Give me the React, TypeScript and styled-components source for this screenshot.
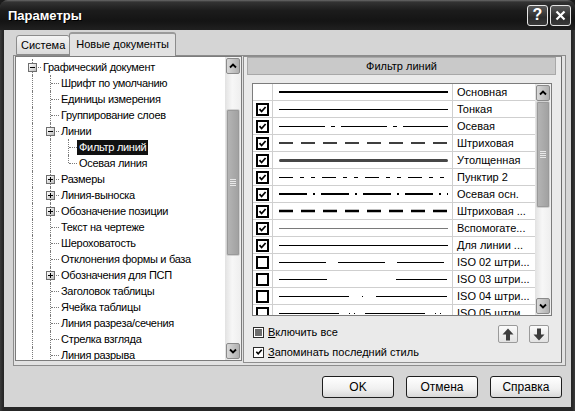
import React from "react";
import styled, { createGlobalStyle } from "styled-components";

const GlobalStyle = createGlobalStyle`
  html, body { margin: 0; padding: 0; background: #1b1b1b; }
  body { width: 575px; height: 411px; overflow: hidden; font-family: "Liberation Sans", Arial, sans-serif; }
  * { box-sizing: border-box; }
`;

const Window = styled.div`
  width: 575px;
  height: 411px;
  display: flex;
  flex-direction: column;
  background: linear-gradient(to right, #3a3a3a, #262626 3px, #262626 calc(100% - 3px), #3a3a3a);
  border-radius: 8px 8px 0 0;
  overflow: hidden;
`;

const TitleBar = styled.div`
  height: 30px;
  flex: none;
  display: flex;
  align-items: center;
  padding: 0 4px 0 8px;
  background: linear-gradient(#6a6a6a 0, #333 2px, #1c1c1c 35%, #141414 70%, #202020 100%);
`;

const Title = styled.div`
  flex: 1;
  color: #fff;
  font: bold 13px "Liberation Sans", Arial, sans-serif;
  text-shadow: 1px 1px 0 #000;
`;

const CaptionButton = styled.div`
  width: 21px;
  height: 21px;
  margin-left: 2px;
  border: 1px solid #e6e6e6;
  border-radius: 3px;
  background: linear-gradient(#5a5a5a, #2c2c2c 60%, #3a3a3a);
  display: flex;
  align-items: center;
  justify-content: center;
  color: #fff;
  font: bold 16px "Liberation Sans", Arial, sans-serif;
`;

const Body = styled.div`
  flex: 1;
  margin: 0 4px 4px;
  background: #d5d5d5;
  display: flex;
  flex-direction: column;
  padding: 3px 5px 0 9px;
`;

const TabStrip = styled.div`
  display: flex;
  align-items: flex-end;
  height: 23px;
  padding-left: 3px;
  margin-bottom: -1px;
  position: relative;
  z-index: 1;
`;

const Tab = styled.div<{ $active?: boolean }>`
  height: ${(p) => (p.$active ? 24 : 20)}px;
  padding: ${(p) => (p.$active ? "0 6px 2px 6px" : "0 4px 0 4px")};
  margin-bottom: ${(p) => (p.$active ? 0 : 1)}px;
  display: flex;
  align-items: center;
  font-size: 11px;
  color: #000;
  border: 1px solid #8c8c8c;
  border-bottom: ${(p) => (p.$active ? "none" : "1px solid #8c8c8c")};
  border-radius: 3px 3px 0 0;
  background: ${(p) =>
    p.$active ? "#e2e2e2" : "linear-gradient(#f4f4f4, #dadada)"};
  ${(p) => (p.$active ? "border-top: 2px solid #9a9a9a;" : "margin-right: -1px;")}
`;

const TabPage = styled.div`
  height: 311px;
  flex: none;
  border: 1px solid #8c8c8c;
  background: #e2e2e2;
  padding: 0 3px 0 1px;
  display: flex;
  align-items: flex-start;
  gap: 1px;
`;

/* ---------- tree ---------- */

const TreeBox = styled.div`
  width: 227px;
  height: 305px;
  border: 1px solid #7c7c7c;
  background: #fff;
  display: flex;
`;

const TreeList = styled.div`
  flex: 1;
  padding-top: 2px;
  overflow: hidden;
  font-size: 11px;
  letter-spacing: -0.3px;
`;

const TreeRow = styled.div`
  height: 16px;
  display: flex;
  align-items: center;
  padding-left: 7px;
  white-space: nowrap;
`;

const Guide = styled.div<{ $line?: "full" | "half" | "none"; $branch?: boolean }>`
  width: 18px;
  height: 16px;
  flex: none;
  position: relative;
  &::before {
    content: "";
    display: ${(p) => (p.$line === "none" ? "none" : "block")};
    position: absolute;
    left: 9px;
    top: 0;
    height: ${(p) => (p.$line === "half" ? 8 : 16)}px;
    border-left: 1px dotted #7a7a7a;
  }
  &::after {
    content: "";
    display: ${(p) => (p.$branch ? "block" : "none")};
    position: absolute;
    left: 10px;
    top: 8px;
    width: 8px;
    border-top: 1px dotted #7a7a7a;
  }
`;

const Expander = styled.div`
  position: absolute;
  left: 5px;
  top: 4px;
  width: 9px;
  height: 9px;
  border: 1px solid #6e6e6e;
  background: linear-gradient(135deg, #fff, #bdbdbd);
  z-index: 1;
  display: flex;
  align-items: center;
  justify-content: center;
`;

const TreeLabel = styled.span<{ $selected?: boolean }>`
  height: 15px;
  line-height: 15px;
  padding: 0 2px;
  color: ${(p) => (p.$selected ? "#fff" : "#000")};
  background: ${(p) => (p.$selected ? "#111" : "transparent")};
`;

/* ---------- scrollbar ---------- */

const ScrollBar = styled.div`
  width: 16px;
  flex: none;
  display: flex;
  flex-direction: column;
  background: linear-gradient(to right, #e2e2e2, #f7f7f7 45%, #eeeeee);
`;

const ScrollBtn = styled.div`
  height: 16px;
  margin: 1px 1px 0;
  flex: none;
  border: 1px solid #8a8a8a;
  border-radius: 2px;
  background: linear-gradient(to right, #d8d8d8, #b0b0b0);
  display: flex;
  align-items: center;
  justify-content: center;
  &:last-child {
    margin: 0 1px 1px;
  }
`;

const Track = styled.div`
  flex: 1;
  position: relative;
`;

const Thumb = styled.div<{ $top: number; $h: number }>`
  position: absolute;
  left: 1px;
  right: 1px;
  top: ${(p) => p.$top}px;
  height: ${(p) => p.$h}px;
  border: 1px solid #d2d2d2;
  outline: 1px solid #9a9a9a;
  outline-offset: -2px;
  border-radius: 2px;
  background: linear-gradient(to right, #b6b6b6, #a0a0a0);
  display: flex;
  align-items: center;
  justify-content: center;
`;

const Grip = styled.div`
  width: 6px;
  height: 7px;
  background: repeating-linear-gradient(#e8e8e8 0 1px, transparent 1px 2px);
`;

const Chevron = ({ down }: { down?: boolean }) => (
  <svg width="8" height="6" viewBox="0 0 8 6">
    <path
      d={down ? "M1 1.5 L4 4.5 L7 1.5" : "M1 4.5 L4 1.5 L7 4.5"}
      fill="none"
      stroke="#000"
      strokeWidth="1.8"
    />
  </svg>
);

const VScroll = ({ top, h }: { top: number; h: number }) => (
  <ScrollBar>
    <ScrollBtn>
      <Chevron />
    </ScrollBtn>
    <Track>
      <Thumb $top={top} $h={h}>
        <Grip />
      </Thumb>
    </Track>
    <ScrollBtn>
      <Chevron down />
    </ScrollBtn>
  </ScrollBar>
);

/* ---------- right panel ---------- */

const Panel = styled.div`
  width: 319px;
  height: 307px;
  border: 1px solid #8e8e8e;
  border-right-color: #6a6a6a;
  background: #eaeaea;
  display: flex;
  flex-direction: column;
`;

const PanelHeader = styled.div`
  height: 18px;
  margin: 0 5px 0 3px;
  border: 1px solid #a8a8a8;
  background: #c9c9c9;
  display: flex;
  align-items: center;
  justify-content: center;
  font-size: 11px;
`;

const ListBox = styled.div`
  height: 233px;
  margin: 8px 9px 0 8px;
  border: 1px solid #7c7c7c;
  background: #fff;
  display: flex;
`;

const Rows = styled.div`
  flex: 1;
  overflow: hidden;
`;

const LineRow = styled.div`
  height: 17px;
  display: grid;
  grid-template-columns: 20px 180px 1fr;
  border-bottom: 1px solid #cfcfcf;
`;

const Cell = styled.div`
  display: flex;
  align-items: center;
  border-right: 1px solid #cfcfcf;
  overflow: hidden;
`;

const CheckCell = styled(Cell)`
  justify-content: center;
`;

const SampleCell = styled(Cell)`
  padding-left: 6px;
`;

const LabelCell = styled(Cell)`
  border-right: none;
  padding-left: 4px;
  font-size: 11px;
  white-space: nowrap;
`;

const BigCheck = styled.div`
  width: 13px;
  height: 13px;
  border: 2px solid #000;
  background: #fff;
  display: flex;
  align-items: center;
  justify-content: center;
`;

const Tick = ({ size = 9 }: { size?: number }) => (
  <svg width={size} height={size} viewBox="0 0 9 9">
    <path d="M1.5 4.2 L3.6 6.5 L7.6 2" fill="none" stroke="#000" strokeWidth="1.8" />
  </svg>
);

const PanelFooter = styled.div`
  display: flex;
  justify-content: space-between;
  margin: 8px 12px 0 9px;
`;

const Options = styled.div`
  display: flex;
  flex-direction: column;
  gap: 4px;
`;

const Option = styled.div`
  height: 16px;
  display: flex;
  align-items: center;
  gap: 4px;
  font-size: 11px;
  u {
    text-decoration: underline;
  }
`;

const SmallCheck = styled.div<{ $mixed?: boolean }>`
  width: 11px;
  height: 11px;
  border: 1px solid #2a2a2a;
  background: #fff;
  display: flex;
  align-items: center;
  justify-content: center;
  &::before {
    content: "";
    display: ${(p) => (p.$mixed ? "block" : "none")};
    width: 7px;
    height: 7px;
    background: #6e6e6e;
  }
`;

const Arrows = styled.div`
  display: flex;
  gap: 11px;
  padding-top: 1px;
`;

const ArrowBtn = styled.div`
  width: 20px;
  height: 18px;
  border: 1px solid #9a9a9a;
  border-radius: 2px;
  background: linear-gradient(#fbfbfb, #e2e2e2);
  display: flex;
  align-items: center;
  justify-content: center;
`;

const BigArrow = ({ down }: { down?: boolean }) => (
  <svg width="12" height="13" viewBox="0 0 12 13">
    <path
      d="M6 0.5 L11.5 6.5 L8 6.5 L8 12.5 L4 12.5 L4 6.5 L0.5 6.5 Z"
      fill="#3c3c3c"
      transform={down ? "rotate(180 6 6.5)" : undefined}
    />
  </svg>
);

/* ---------- dialog buttons ---------- */

const ButtonRow = styled.div`
  display: flex;
  justify-content: flex-end;
  gap: 12px;
  margin-top: 10px;
  padding-right: 4px;
`;

const DialogButton = styled.div`
  width: 72px;
  height: 22px;
  border: 1px solid #1e1e1e;
  border-radius: 3px;
  background: linear-gradient(#ffffff, #f0f0f0 60%, #d8d8d8);
  display: flex;
  align-items: center;
  justify-content: center;
  font-size: 12px;
`;

/* ---------- data ---------- */

type TreeItem = {
  label: string;
  level: number;
  toggle?: "plus" | "minus";
  last?: boolean;
  selected?: boolean;
};

const tree: TreeItem[] = [
  { label: "Графический документ", level: 0, toggle: "minus" },
  { label: "Шрифт по умолчанию", level: 1 },
  { label: "Единицы измерения", level: 1 },
  { label: "Группирование слоев", level: 1 },
  { label: "Линии", level: 1, toggle: "minus" },
  { label: "Фильтр линий", level: 2, selected: true },
  { label: "Осевая линия", level: 2, last: true },
  { label: "Размеры", level: 1, toggle: "plus" },
  { label: "Линия-выноска", level: 1, toggle: "plus" },
  { label: "Обозначение позиции", level: 1, toggle: "plus" },
  { label: "Текст на чертеже", level: 1 },
  { label: "Шероховатость", level: 1 },
  { label: "Отклонения формы и база", level: 1 },
  { label: "Обозначения для ПСП", level: 1, toggle: "plus" },
  { label: "Заголовок таблицы", level: 1 },
  { label: "Ячейка таблицы", level: 1 },
  { label: "Линия разреза/сечения", level: 1 },
  { label: "Стрелка взгляда", level: 1 },
  { label: "Линия разрыва", level: 1 },
];

type Sample = { w: number; c?: string; dash?: string; round?: boolean };

const lineTypes: { label: string; checked: boolean | null; sample: Sample }[] = [
  { label: "Основная", checked: null, sample: { w: 2 } },
  { label: "Тонкая", checked: true, sample: { w: 1 } },
  { label: "Осевая", checked: true, sample: { w: 1, dash: "46 6 4 6" } },
  { label: "Штриховая", checked: true, sample: { w: 1.4, dash: "14 8" } },
  { label: "Утолщенная", checked: true, sample: { w: 3, c: "#474747", round: true } },
  { label: "Пунктир 2", checked: true, sample: { w: 1, dash: "14 7 4 7 4 7" } },
  { label: "Осевая осн.", checked: true, sample: { w: 2, dash: "28 6 2 6" } },
  { label: "Штриховая ...", checked: true, sample: { w: 2.4, dash: "14 8" } },
  { label: "Вспомогате...", checked: true, sample: { w: 1, c: "#7a7a7a" } },
  { label: "Для линии ...", checked: true, sample: { w: 1 } },
  { label: "ISO 02 штри...", checked: false, sample: { w: 1, dash: "47 12" } },
  { label: "ISO 03 штри...", checked: false, sample: { w: 1, dash: "48 69 51 40" } },
  { label: "ISO 04 штри...", checked: false, sample: { w: 1, dash: "70 13 1 13 71 40" } },
  { label: "ISO 05 штри...", checked: false, sample: { w: 1, dash: "60 10 1 4 1 10" } },
];

const LineSample = ({ s }: { s: Sample }) => {
  const y = s.w % 2 === 1 ? 8.5 : 8;
  return (
    <svg width="169" height="16">
      <line
        x1={s.round ? 1.5 : 0}
        x2={s.round ? 167.5 : 169}
        y1={y}
        y2={y}
        stroke={s.c || "#000"}
        strokeWidth={s.w}
        strokeDasharray={s.dash}
        strokeLinecap={s.round ? "round" : "butt"}
      />
    </svg>
  );
};

const TreeNode = ({ item }: { item: TreeItem }) => {
  const guides = [];
  for (let i = 0; i < item.level; i++) guides.push(<Guide key={i} $line="full" />);
  return (
    <TreeRow>
      {guides}
      <Guide $line={item.last ? "half" : "full"} $branch>
        {item.toggle && (
          <Expander>
            <svg width="7" height="7" viewBox="0 0 7 7">
              <rect x="1" y="3" width="5" height="1" fill="#000" />
              {item.toggle === "plus" && <rect x="3" y="1" width="1" height="5" fill="#000" />}
            </svg>
          </Expander>
        )}
      </Guide>
      <TreeLabel $selected={item.selected}>{item.label}</TreeLabel>
    </TreeRow>
  );
};

export default function App() {
  return (
    <>
      <GlobalStyle />
      <Window>
        <TitleBar>
          <Title>Параметры</Title>
          <CaptionButton>?</CaptionButton>
          <CaptionButton>
            <svg width="11" height="11" viewBox="0 0 11 11">
              <path d="M1.5 1.5 L9.5 9.5 M9.5 1.5 L1.5 9.5" stroke="#fff" strokeWidth="2.2" />
            </svg>
          </CaptionButton>
        </TitleBar>
        <Body>
          <TabStrip>
            <Tab>Система</Tab>
            <Tab $active>Новые документы</Tab>
          </TabStrip>
          <TabPage>
            <TreeBox>
              <TreeList>
                {tree.map((item) => (
                  <TreeNode key={item.label} item={item} />
                ))}
              </TreeList>
              <VScroll top={35} h={147} />
            </TreeBox>
            <Panel>
              <PanelHeader>Фильтр линий</PanelHeader>
              <ListBox>
                <Rows>
                  {lineTypes.map((l) => (
                    <LineRow key={l.label}>
                      <CheckCell>
                        {l.checked !== null && <BigCheck>{l.checked && <Tick />}</BigCheck>}
                      </CheckCell>
                      <SampleCell>
                        <LineSample s={l.sample} />
                      </SampleCell>
                      <LabelCell>{l.label}</LabelCell>
                    </LineRow>
                  ))}
                </Rows>
                <VScroll top={0} h={107} />
              </ListBox>
              <PanelFooter>
                <Options>
                  <Option>
                    <SmallCheck $mixed />
                    <span>
                      <u>В</u>ключить все
                    </span>
                  </Option>
                  <Option>
                    <SmallCheck>
                      <Tick size={8} />
                    </SmallCheck>
                    <span>
                      <u>З</u>апоминать последний стиль
                    </span>
                  </Option>
                </Options>
                <Arrows>
                  <ArrowBtn>
                    <BigArrow />
                  </ArrowBtn>
                  <ArrowBtn>
                    <BigArrow down />
                  </ArrowBtn>
                </Arrows>
              </PanelFooter>
            </Panel>
          </TabPage>
          <ButtonRow>
            <DialogButton>OK</DialogButton>
            <DialogButton>Отмена</DialogButton>
            <DialogButton>Справка</DialogButton>
          </ButtonRow>
        </Body>
      </Window>
    </>
  );
}
